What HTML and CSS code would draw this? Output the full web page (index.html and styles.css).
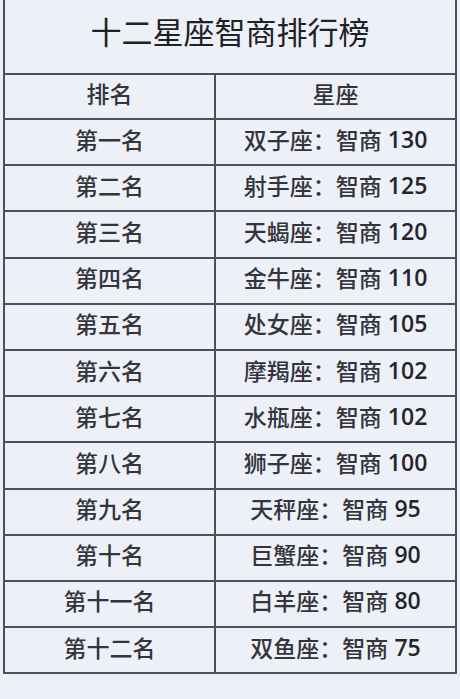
FILE: index.html
```html
<!DOCTYPE html>
<html lang="zh-CN">
<head>
<meta charset="utf-8">
<title>十二星座智商排行榜</title>
<link rel="stylesheet" href="styles.css">
</head>
<body>
<div class="board">
  <div class="title">十二星座智商排行榜</div>
  <div class="grid">
    <div class="cell head left">排名</div><div class="cell head">星座</div>
    <div class="cell left">第一名</div><div class="cell">双子座：智商 <span class="num">130</span></div>
    <div class="cell left">第二名</div><div class="cell">射手座：智商 <span class="num">125</span></div>
    <div class="cell left">第三名</div><div class="cell">天蝎座：智商 <span class="num">120</span></div>
    <div class="cell left">第四名</div><div class="cell">金牛座：智商 <span class="num">110</span></div>
    <div class="cell left">第五名</div><div class="cell">处女座：智商 <span class="num">105</span></div>
    <div class="cell left">第六名</div><div class="cell">摩羯座：智商 <span class="num">102</span></div>
    <div class="cell left">第七名</div><div class="cell">水瓶座：智商 <span class="num">102</span></div>
    <div class="cell left">第八名</div><div class="cell">狮子座：智商 <span class="num">100</span></div>
    <div class="cell left">第九名</div><div class="cell">天秤座：智商 <span class="num">95</span></div>
    <div class="cell left">第十名</div><div class="cell">巨蟹座：智商 <span class="num">90</span></div>
    <div class="cell left">第十一名</div><div class="cell">白羊座：智商 <span class="num">80</span></div>
    <div class="cell left">第十二名</div><div class="cell">双鱼座：智商 <span class="num">75</span></div>
  </div>
</div>
</body>
</html>
```
FILE: styles.css
```css
html, body {
  margin: 0;
  padding: 0;
  background: #eef0f8;
}
body {
  font-family: "Noto Sans CJK SC", "Noto Sans", sans-serif;
  color: #33343c;
  height: 699px;
  overflow: hidden;
}
.board {
  box-sizing: border-box;
  width: 454px;
  margin-left: 3px;
  border: 2px solid #4e5059;
  border-top: none;
}
.title {
  height: 75px;
  box-sizing: border-box;
  padding-bottom: 13px;
  display: flex;
  align-items: center;
  justify-content: center;
  font-size: 31px;
  color: #202126;
  border-bottom: 2px solid #4e5059;
}
.grid {
  display: grid;
  grid-template-columns: 211px 1fr;
}
.cell {
  height: 46.2px;
  box-sizing: border-box;
  border-bottom: 2px solid #4e5059;
  display: flex;
  align-items: center;
  justify-content: center;
  font-size: 23px;
  font-weight: 500;
  padding-bottom: 7px;
  white-space: pre;
}
.cell.head {
  height: 45px;
}
.grid .cell:nth-last-child(-n+2) {
  border-bottom: none;
  height: 44.2px;
}
.left {
  border-right: 2px solid #4e5059;
}
.num {
  font-family: "Open Sans", "Noto Sans", sans-serif;
  font-weight: 600;
  color: #24252b;
  margin-left: 1px;
}
```
